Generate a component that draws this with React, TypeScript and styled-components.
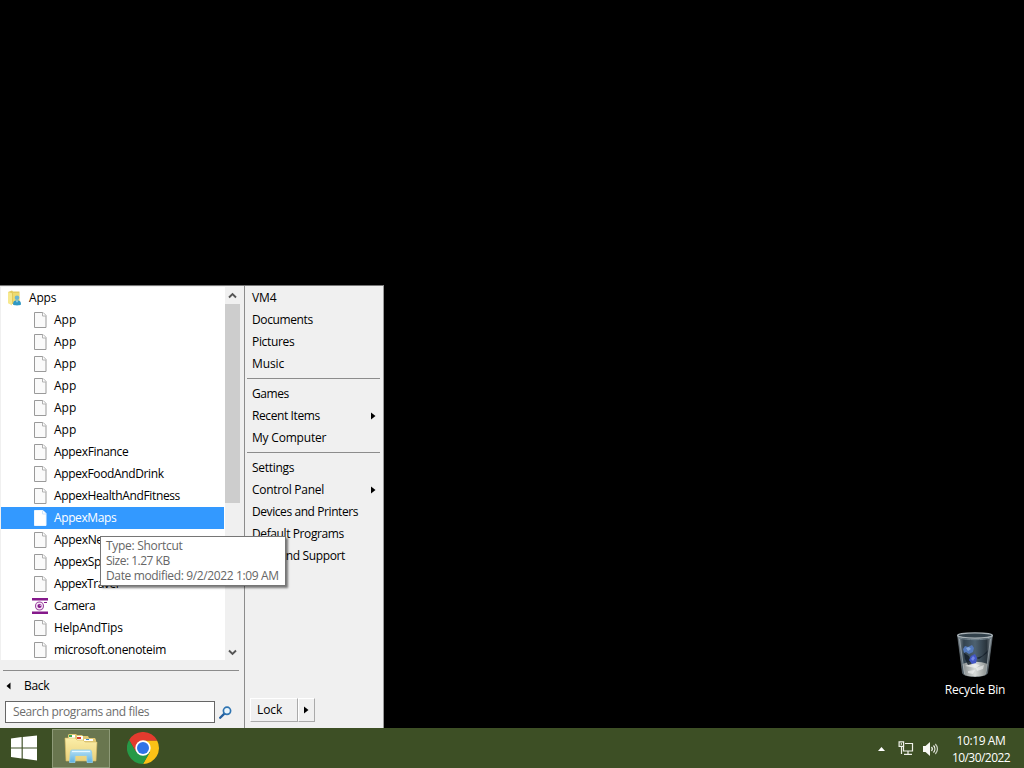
import React from "react";
import styled, { createGlobalStyle } from "styled-components";

const GlobalStyle = createGlobalStyle`
  * { box-sizing: border-box; }
  body { margin: 0; background: #000; overflow: hidden; }
`;

const Screen = styled.div`
  width: 1024px;
  height: 768px;
  display: grid;
  grid-template-rows: 728px 40px;
  background: #000;
  font: 12px/22px "Open Sans", "Noto Sans", sans-serif;
  color: #000;
  overflow: hidden;
`;

const Desktop = styled.main`
  position: relative;
  display: flex;
  align-items: flex-end;
`;

const StartMenu = styled.section`
  position: relative;
  width: 384px;
  height: 443px;
  display: grid;
  grid-template-columns: 244px 1fr;
  background: #f0f0f0;
  border-top: 1px solid #777;
  border-right: 1px solid #999;
`;

const Programs = styled.div`
  display: flex;
  flex-direction: column;
  padding-top: 1px;
`;

const ListArea = styled.div`
  display: flex;
  height: 373px;
  padding-left: 1px;
`;

const List = styled.div`
  width: 224px;
  background: #fff;
  overflow: hidden;
`;

const Row = styled.div<{ $root?: boolean; $selected?: boolean }>`
  display: flex;
  align-items: center;
  height: 22px;
  width: 223px;
  padding-left: ${(p) => (p.$root ? 5 : 31)}px;
  gap: ${(p) => (p.$root ? 5 : 6)}px;
  background: ${(p) => (p.$selected ? "#3399ff" : "transparent")};
  color: ${(p) => (p.$selected ? "#fff" : "#000")};
`;

const Label = styled.span<{ $spacing?: number }>`
  letter-spacing: ${(p) => p.$spacing ?? -0.33}px;
  white-space: nowrap;
`;

const Scrollbar = styled.div`
  width: 15px;
  display: grid;
  grid-template-rows: 17px 1fr 15px;
  justify-items: center;
  align-items: center;
`;

const Thumb = styled.div`
  width: 15px;
  height: 199px;
  align-self: start;
  background: #cdcdcd;
`;

const Rule = styled.div<{ $top: number; $bottom: number; $left: number; $right: number }>`
  height: 1px;
  flex: none;
  margin: ${(p) => `${p.$top}px ${p.$right}px ${p.$bottom}px ${p.$left}px`};
  background: #8c8c8c;
`;

const BackRow = styled.div`
  display: flex;
  align-items: center;
  gap: 13px;
  height: 22px;
  margin-top: 4px;
  padding-left: 6px;
`;

const SearchRow = styled.div`
  display: flex;
  align-items: center;
  gap: 4px;
  margin-top: 4px;
  padding-left: 5px;
`;

const SearchBox = styled.div`
  width: 210px;
  height: 22px;
  border: 1px solid #666;
  background: #fff;
  color: #6d6d6d;
  padding-left: 7px;
  line-height: 19px;
`;

const Places = styled.div`
  display: flex;
  flex-direction: column;
  border-left: 1px solid #8c8c8c;
  padding-top: 1px;
`;

const Place = styled.div`
  display: flex;
  align-items: center;
  justify-content: space-between;
  height: 22px;
  padding: 0 7px;
`;

const PowerRow = styled.div`
  display: flex;
  margin: auto 0 6px 5px;
`;

const PowerButton = styled.div<{ $width: number }>`
  display: flex;
  align-items: center;
  width: ${(p) => p.$width}px;
  height: 24px;
  padding-left: ${(p) => (p.$width > 20 ? 6 : 5)}px;
  border-top: 1px solid #fff;
  border-left: 1px solid #fff;
  border-right: 1px solid #aaa;
  border-bottom: 1px solid #aaa;
`;

const Tooltip = styled.div`
  position: absolute;
  left: 100px;
  top: 250px;
  width: 186px;
  height: 50px;
  padding: 1px 5px;
  display: flex;
  flex-direction: column;
  background: #fff;
  border: 1px solid #767676;
  box-shadow: 2px 2px 2px rgba(0, 0, 0, 0.5);
  color: #666;
  line-height: 15px;
`;

const DesktopIcon = styled.div`
  position: absolute;
  left: 937px;
  top: 631px;
  width: 76px;
  display: flex;
  flex-direction: column;
  align-items: center;
  color: #fff;
`;

const Taskbar = styled.footer`
  display: flex;
  align-items: center;
  background: #3d4f25;
  color: #fff;
`;

const TaskButton = styled.div<{ $width: number; $active?: boolean }>`
  width: ${(p) => p.$width}px;
  height: 39px;
  display: flex;
  align-items: center;
  justify-content: center;
  background: ${(p) => (p.$active ? "#69764f" : "transparent")};
  border: 1px solid ${(p) => (p.$active ? "#8e9a78" : "transparent")};
`;

const StartButton = styled.div`
  width: 52px;
  display: flex;
  padding-left: 11px;
`;

const Tray = styled.div`
  margin-left: auto;
  display: flex;
  align-items: center;
  padding-top: 1px;
`;

const TrayIcons = styled.div`
  display: flex;
  align-items: center;
  margin-right: 13px;
`;

const TrayIcon = styled.div<{ $gap: number }>`
  display: flex;
  margin-right: ${(p) => p.$gap}px;
`;

const Clock = styled.div`
  width: 60px;
  margin-right: 13px;
  display: flex;
  flex-direction: column;
  align-items: center;
  line-height: 17px;
`;

const FileIcon = ({ selected }: { selected?: boolean }) => (
  <svg width="16" height="16" viewBox="0 0 16 16">
    <path d="M2.500.5h8.500l3 3v12H2.500z" fill={selected ? "#fff" : "#fafafa"} stroke={selected ? "#eef6ff" : "#9a9a9a"} />
    <path d="M10.500.5v3.500h3.500" fill="#fff" stroke={selected ? "#cfe4fa" : "#b0b0b0"} />
  </svg>
);

const CameraIcon = () => (
  <svg width="16" height="16" viewBox="0 0 16 16">
    <path fill="#fff" d="M0 0h16v16H0z" />
    <path fill="#85198b" d="M0 0h16v2.600H0zM0 13.400h16V16H0zM12 4h3v1h-3z" />
    <circle cx="7.500" cy="8" r="4" fill="#f8e9f8" stroke="#9b45a0" strokeWidth="1.100" />
    <circle cx="7.500" cy="8" r="2.100" fill="#85198b" />
    <circle cx="8.200" cy="7.300" r=".6" fill="#fff" />
  </svg>
);

const UserFolderIcon = () => (
  <svg width="18" height="16" viewBox="0 0 18 16">
    <path fill="#e3ca5c" d="M2 2l4-1.500 1 1h6.500v12.500H5L2 13z" />
    <path fill="#f7e98f" d="M2 2l4 1.200V15.500L2 13z" />
    <path fill="#eedb70" d="M7 3h6v11.500H7z" />
    <circle cx="11" cy="7.800" r="2.300" fill="#6cb6d2" />
    <path fill="#2e98c4" d="M7 14.500c0-3 1.200-4.300 4-4.300s4 1.300 4 4.300c-2 1.200-6 1.200-8 0z" />
    <path fill="#a1d5e6" d="M9.700 10.400h2.600L11 12.700z" />
  </svg>
);

const Chevron = ({ down }: { down?: boolean }) => (
  <svg width="9" height="7" viewBox="0 0 9 7">
    <path d={down ? "M1 1.500l3.500 3.500L8 1.500" : "M1 5.500L4.500 2 8 5.500"} fill="none" stroke="#555" strokeWidth="1.900" />
  </svg>
);

const Arrow = ({ left }: { left?: boolean }) => (
  <svg width="5" height="8" viewBox="0 0 5 8">
    <path d={left ? "M4.500 .5v7L.5 4z" : "M0 .5v7L4.500 4z"} fill="#000" />
  </svg>
);

const SearchIcon = () => (
  <svg width="13" height="13" viewBox="0 0 13 13">
    <path d="M5.400 7.600L1.200 11.800" stroke="#245f9e" strokeWidth="2.300" strokeLinecap="round" />
    <circle cx="8" cy="4.800" r="3.600" fill="#e9f5fc" stroke="#2f74b1" strokeWidth="1.700" />
  </svg>
);

const WindowsIcon = () => (
  <svg width="26" height="26" viewBox="0 0 27 26">
    <path fill="#fff" d="M0 3.200L11 1.700v10.800H0zM12.200 1.500L27 0v12.500H12.200zM0 13.500h11v10.300L0 22.300zM12.200 13.500H27V26l-14.800-2z" />
  </svg>
);

const ExplorerIcon = () => (
  <svg width="34" height="31" viewBox="0 0 34 31">
    <defs>
      <linearGradient id="folder" x1="0" y1="0" x2="0" y2="1">
        <stop offset="0" stopColor="#fbeea8" />
        <stop offset="1" stopColor="#e9d07a" />
      </linearGradient>
      <linearGradient id="stand" x1="0" y1="0" x2="0" y2="1">
        <stop offset="0" stopColor="#b4e0f6" />
        <stop offset="1" stopColor="#5fb0e0" />
      </linearGradient>
    </defs>
    <path fill="#e0c874" d="M4 2l1-1h7l1 1h5l1 1h5l1 2h6l1 2v18H3z" />
    <path fill="#fff" d="M5 2h6v3H5zM13 3h6v4h-6zM20 6h9v2h-9z" />
    <path fill="#39a852" d="M5 2h3v2H5z" />
    <path fill="#d6402e" d="M13 4h4v2h-4z" />
    <path fill="#3a86c9" d="M22 6h3v1h-3z" />
    <path fill="url(#folder)" stroke="#d5b863" strokeWidth=".6" d="M1 5h10l2 2h6l2 2h12l-1 19H2z" />
    <path fill="url(#stand)" stroke="#8fcdec" strokeWidth=".8" d="M5.500 29.500l1-11c0-1 .8-1.500 2-1.500h17c1.200 0 2 .5 2 1.500l1 11h-5.500V22.500h-12v7z" />
    <path stroke="#e7f8ff" strokeWidth="1.200" d="M8 18.500h18" />
  </svg>
);

const ChromeIcon = () => (
  <svg width="32" height="32" viewBox="0 0 48 48">
    <path fill="#e33b2e" d="M3.200 12A24 24 0 0 1 44.800 12l.5 1H24L13.600 30z" />
    <path fill="#fbc116" d="M24 13h21.300A24 24 0 0 1 24 48l10.400-18z" />
    <path fill="#269947" d="M3.200 12A24 24 0 0 0 24 48l10.400-18H13.600z" />
    <circle cx="24" cy="24" r="11.500" fill="#fff" />
    <circle cx="24" cy="24" r="9" fill="#2e73e8" />
  </svg>
);

const RecycleBinIcon = () => (
  <svg width="38" height="48" viewBox="0 0 38 48">
    <defs>
      <linearGradient id="glass" x1="0" x2="1" y1="0" y2="0">
        <stop offset="0" stopColor="#8e989e" />
        <stop offset=".18" stopColor="#33434f" />
        <stop offset=".5" stopColor="#4d6170" />
        <stop offset=".83" stopColor="#29343c" />
        <stop offset="1" stopColor="#929ca2" />
      </linearGradient>
      <linearGradient id="paper" x1="0" x2="1" y1="0" y2="0">
        <stop offset="0" stopColor="#83898a" />
        <stop offset=".5" stopColor="#d9dcda" />
        <stop offset="1" stopColor="#858b8a" />
      </linearGradient>
    </defs>
    <path fill="url(#glass)" stroke="#68727a" strokeWidth=".7" d="M1.500 4h35l-5 38c-.5 4.500-24.500 4.500-25 0z" />
    <ellipse cx="19" cy="4.500" rx="17.300" ry="2.600" fill="#33424c" stroke="#a9b2b7" strokeWidth="1.400" />
    <path d="M3 7c8 2.200 24 2.200 32 0" fill="none" stroke="#71828c" />
    <path fill="url(#paper)" d="M6.500 33c7-3 18-3 25 0l-1.500 10c-1 3.500-21 3.500-22 0z" />
    <path fill="#fff" opacity=".5" d="M9 35l7-3 8 2-4 3zM20 37l8-3-1 4-6 2zM12 40l7-1-2 4-5-1z" />
    <path fill="#111c27" d="M8 22l5 3 3 8-4 1-3-6zM20 27l6-2 6-6-1 3-8 6z" opacity=".8" />
    <path fill="#5379bd" d="M7 18l2-3 3 1 4-2 2 3-1 4-4 2-3-2-2 1z" />
    <path fill="#86a9dc" d="M10 17l3-1 2 2-3 2z" />
    <path fill="#4357c6" d="M13 29l2-4 4-2 2 4-1 5-4 1z" />
    <path fill="#7386e4" d="M17 25l2 2-2 3-2-2z" />
    <path stroke="#b6c0c5" strokeWidth="1" opacity=".6" d="M3.500 8l5 35M34.500 8l-4.500 35" />
  </svg>
);

const NetworkIcon = () => (
  <svg width="16" height="15" viewBox="0 0 16 15">
    <path fill="none" stroke="#f0f1ea" strokeWidth="1.200" d="M7 2.500h7.500v7.500h-9V6M10 10v3M6 13.300h8M3.500 5v8" />
    <path fill="#3d4f25" stroke="#f0f1ea" strokeWidth="1.200" d="M1.100.8h4.500v4.500H1.100z" />
    <path fill="#f0f1ea" d="M2.800 2h1v2h-1z" />
  </svg>
);

const VolumeIcon = () => (
  <svg width="15" height="14" viewBox="0 0 15 14">
    <path fill="#f8f8f4" d="M0 4h2.500L7 0v14l-4.500-4H0z" />
    <path fill="none" stroke="#f8f8f4" strokeWidth="1.200" d="M8.500 5c1 1.200 1 2.800 0 4M10.500 3.500c1.800 2 1.800 5 0 7" />
    <path fill="none" stroke="#c6ccbc" strokeWidth="1.200" d="M12.300 2c2.600 3 2.600 7 0 10" />
  </svg>
);

const files: { name: string; spacing?: number }[] = [
  ...Array.from({ length: 6 }, () => ({ name: "App", spacing: 0 })),
  { name: "AppexFinance" },
  { name: "AppexFoodAndDrink", spacing: -0.36 },
  { name: "AppexHealthAndFitness", spacing: -0.36 },
  { name: "AppexMaps", spacing: -0.4 },
  { name: "AppexNews" },
  { name: "AppexSports" },
  { name: "AppexTravel", spacing: -0.45 },
  { name: "Camera", spacing: -0.4 },
  { name: "HelpAndTips", spacing: -0.2 },
  { name: "microsoft.onenoteim", spacing: -0.28 },
];

const places: { name: string; spacing?: number; submenu?: boolean }[][] = [
  [
    { name: "VM4", spacing: -0.1 },
    { name: "Documents", spacing: -0.38 },
    { name: "Pictures" },
    { name: "Music", spacing: -0.1 },
  ],
  [
    { name: "Games", spacing: -0.45 },
    { name: "Recent Items", submenu: true, spacing: -0.4 },
    { name: "My Computer", spacing: -0.2 },
  ],
  [
    { name: "Settings", spacing: -0.3 },
    { name: "Control Panel", submenu: true, spacing: -0.29 },
    { name: "Devices and Printers", spacing: -0.42 },
    { name: "Default Programs", spacing: -0.4 },
    { name: "Help and Support", spacing: -0.35 },
  ],
];

export default function App() {
  return (
    <>
      <GlobalStyle />
      <Screen>
        <Desktop>
          <StartMenu>
            <Programs>
              <ListArea>
                <List>
                  <Row $root>
                    <UserFolderIcon />
                    <Label $spacing={-0.2}>Apps</Label>
                  </Row>
                  {files.map((file, i) => {
                    const selected = file.name === "AppexMaps";
                    return (
                      <Row key={i} $selected={selected}>
                        {file.name === "Camera" ? <CameraIcon /> : <FileIcon selected={selected} />}
                        <Label $spacing={file.spacing}>{file.name}</Label>
                      </Row>
                    );
                  })}
                </List>
                <Scrollbar>
                  <Chevron />
                  <Thumb />
                  <Chevron down />
                </Scrollbar>
              </ListArea>
              <Rule $top={10} $bottom={0} $left={3} $right={5} />
              <BackRow>
                <Arrow left />
                <Label>Back</Label>
              </BackRow>
              <SearchRow>
                <SearchBox>
                  <Label $spacing={-0.38}>Search programs and files</Label>
                </SearchBox>
                <SearchIcon />
              </SearchRow>
            </Programs>
            <Places>
              {places.map((group, g) => (
                <React.Fragment key={g}>
                  {g > 0 && <Rule $top={3} $bottom={4} $left={2} $right={3} />}
                  {group.map((place) => (
                    <Place key={place.name}>
                      <Label $spacing={place.spacing}>{place.name}</Label>
                      {place.submenu && <Arrow />}
                    </Place>
                  ))}
                </React.Fragment>
              ))}
              <PowerRow>
                <PowerButton $width={48}>
                  <Label $spacing={-0.1}>Lock</Label>
                </PowerButton>
                <PowerButton $width={17}>
                  <Arrow />
                </PowerButton>
              </PowerRow>
            </Places>
            <Tooltip>
              <Label $spacing={-0.3}>Type: Shortcut</Label>
              <Label $spacing={-0.5}>Size: 1.27 KB</Label>
              <Label $spacing={-0.36}>Date modified: 9/2/2022 1:09 AM</Label>
            </Tooltip>
          </StartMenu>
          <DesktopIcon>
            <RecycleBinIcon />
            <Label $spacing={-0.2}>Recycle Bin</Label>
          </DesktopIcon>
        </Desktop>
        <Taskbar>
          <StartButton>
            <WindowsIcon />
          </StartButton>
          <TaskButton $width={58} $active>
            <ExplorerIcon />
          </TaskButton>
          <TaskButton $width={66}>
            <ChromeIcon />
          </TaskButton>
          <Tray>
            <TrayIcons>
              <TrayIcon $gap={13}>
                <svg width="7" height="4" viewBox="0 0 7 4">
                  <path fill="#fff" d="M0 4L3.500 0 7 4z" />
                </svg>
              </TrayIcon>
              <TrayIcon $gap={9}>
                <NetworkIcon />
              </TrayIcon>
              <VolumeIcon />
            </TrayIcons>
            <Clock>
              <Label $spacing={-0.4}>10:19 AM</Label>
              <Label $spacing={-0.55}>10/30/2022</Label>
            </Clock>
          </Tray>
        </Taskbar>
      </Screen>
    </>
  );
}
